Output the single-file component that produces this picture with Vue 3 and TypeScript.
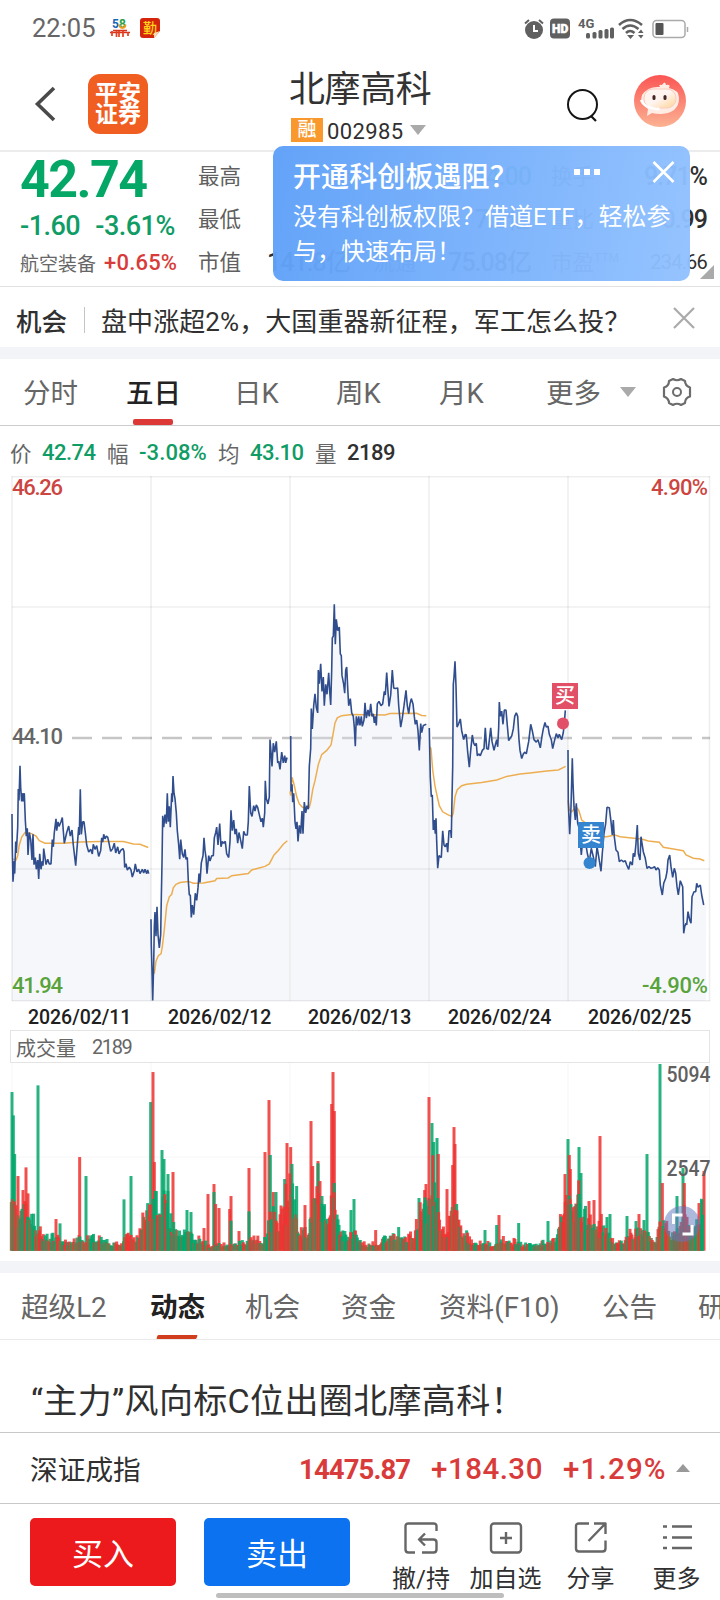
<script setup lang="ts">
type Tone = 'r' | 'g' | 'm'
interface Bar { x: number; h: number; tone: Tone }

const dayOne = '36,963 37,1060 39,1153 43,1095 44,1130 47,1040 49,1072 53,1000 55,893 57,925 60,828 62,890 65,928 68,905 70,928 73,905 76,980 79,1025 82,1003 84,1078 88,1015 92,1035 96,1092 99,1020 102,1105 106,1085 109,1118 113,1092 116,1145 119,1075 123,1118 127,1095 129,1108 131,1060 135,1085 138,1105 143,1090 148,1103 153,1103 157,1035 160,1055 163,1015 168,977 170,1010 174,985 177,998 183,985 187,973 190,1010 193,1045 200,1015 206,997 211,1025 216,1008 220,1050 227,1108 231,1060 236,1000 238,1022 241,894 244,1020 248,985 252,985 256,1015 260,1050 266,1070 272,1062 277,1075 280,1048 285,1062 290,1052 296,1082 302,1065 305,1030 308,1042 311,1020 315,1033 319,1025 323,1028 327,1045 332,1068 338,1060 343,1045 347,1072 353,1055 357,1075 362,1065 369,1060 372,1068 374,1113 378,1102 382,1120 388,1112 393,1120 397,1140 403,1122 406,1103 411,1125 416,1118 420,1130 427,1118 431,1128 435,1118 440,1130 443,1120 446,1130'
const dayTwo = '453,1258 454,1330 456,1400 458,1485 461,1380 463,1280 465,1238 468,1305 471,1223 474,1300 478,1338 482,1300 484,1200 486,1100 488,968 491,1000 495,965 499,990 502,905 505,985 508,942 511,1000 515,905 517,930 519,857 522,905 525,920 529,960 532,1010 536,1050 539,1090 542,1035 547,1075 551,1085 555,1062 558,1090 562,1085 565,1150 568,1190 571,1190 574,1253 577,1218 581,1245 586,1185 590,1205 594,1170 597,1130 600,1155 604,1100 609,1080 612,1030 615,1065 618,1085 621,1130 626,1080 630,1095 635,1080 640,1080 643,1030 647,1015 650,1000 654,1050 659,990 663,1055 667,1040 671,1045 676,1040 680,1075 686,1085 690,1040 693,953 697,1010 701,980 705,1020 709,1005 713,1045 717,1015 722,1038 727,1060 731,1012 736,1022 742,1022 745,985 748,885 752,960 756,970 761,940 765,955 769,938 773,945 778,965 783,985 787,975 790,1000 794,960 796,870 799,920 804,935 808,915 810,755 813,790 816,830 820,765 824,790 829,760 833,820 836,815 840,838 845,790 850,820 854,800 857,820 861,805'
const dayThree = '32,745 33,900 36,880 38,930 41,905 45,985 48,1005 51,985 54,1040 58,995 62,1018 66,955 69,1018 73,930 77,960 81,940 85,950 88,830 92,780 94,668 97,725 101,660 105,627 109,665 113,680 115,560 118,598 122,543 126,620 130,580 133,660 137,600 141,628 146,568 149,620 152,658 155,560 157,470 160,465 163,376 166,488 169,418 173,450 178,440 181,515 184,520 186,575 191,600 194,625 197,560 200,552 203,610 206,660 211,640 215,680 220,690 223,720 226,773 229,690 233,715 236,690 240,715 244,690 247,718 252,700 255,652 259,695 264,672 268,690 272,655 276,690 280,683 283,708 286,690 289,715 292,655 297,648 303,660 308,655 313,620 316,630 320,567 323,610 327,662 332,630 337,560 341,610 346,612 353,610 356,660 362,720 367,695 372,660 378,617 382,660 386,682 390,655 394,640 399,655 403,690 406,712 410,700 414,730 418,785 422,710 425,735 430,715 439,712'
const dayFour = '448,722 449,780 451,860 454,915 457,910 460,1008 463,980 466,1018 468,975 470,1040 473,1115 477,1080 484,1085 488,1010 492,1050 496,1055 500,1045 503,1070 507,1010 512,1010 514,1030 516,920 518,830 520,600 522,580 525,536 528,605 531,720 536,710 541,697 545,730 551,755 556,740 559,742 563,790 568,832 572,785 577,742 581,765 585,772 589,765 592,800 596,795 601,800 607,785 612,780 616,722 620,780 625,782 632,722 636,760 642,785 646,770 650,755 653,775 656,720 658,650 661,690 665,675 669,712 673,672 678,672 682,715 686,758 691,750 695,745 700,725 704,690 709,680 713,690 717,755 720,785 725,808 730,795 735,790 739,795 742,780 746,760 752,712 757,730 762,755 769,762 774,755 781,778 786,745 790,725 795,707 799,720 804,717 808,740 814,755 818,780 823,760 829,738 834,750 838,740 845,755 850,735 853,710 856,673'
const dayFive = '204,330 205,490 209,583 213,500 217,355 219,430 222,500 226,540 229,490 233,550 236,560 240,590 244,645 248,600 256,600 262,640 268,665 274,625 280,650 286,680 291,620 296,650 303,694 307,640 312,580 317,550 321,502 328,503 333,545 337,585 340,540 343,590 348,630 354,637 358,665 364,660 370,665 376,662 380,675 386,688 391,665 397,675 400,640 404,650 408,610 412,555 415,640 420,660 423,590 426,610 430,635 436,655 441,685 447,680 453,685 458,683 464,680 468,690 473,683 478,690 481,735 487,765 491,730 497,715 501,695 504,660 509,645 513,680 518,712 523,685 527,700 531,740 535,765 541,722 548,740 551,880 554,860 558,850 560,855 564,815 569,840 573,850 576,770 582,755 587,755 590,730 594,742 601,735 605,765 611,795'
const avgOne = '40,1090 48,1092 53,1080 58,1050 65,1028 75,1015 95,1018 108,1025 118,1038 135,1045 190,1045 240,1042 300,1040 370,1040 400,1047 420,1048 445,1057'
const avgTwo = '458,1390 463,1410 468,1375 475,1360 483,1355 487,1335 492,1295 500,1220 508,1195 515,1188 520,1170 528,1160 540,1155 565,1152 580,1157 610,1156 645,1150 650,1144 685,1142 695,1136 745,1130 755,1120 795,1110 808,1103 815,1090 822,1078 835,1065 850,1048 862,1038'
const avgThree = '30,900 32,912 36,860 42,880 50,915 58,935 68,945 88,945 93,925 98,895 105,870 115,825 125,797 140,785 153,770 158,745 165,708 172,694 185,688 215,685 315,686 330,682 410,681 425,687 439,688'
const avgFour = '450,775 453,780 458,840 465,885 472,915 478,940 488,957 503,965 516,970 520,960 525,915 532,895 545,884 560,880 605,875 650,868 680,858 720,851 750,848 800,843 835,840 857,830'
const avgFive = '205,480 208,510 215,515 228,500 236,510 245,540 258,550 300,590 320,590 345,585 360,590 395,594 425,597 445,603 478,607 490,622 520,627 550,632 558,645 580,655 600,657 613,662'

// scale raw samples into the plot box, whose origin is the top left of the price chart
function place(raw: string, dx: number, dy: number, sy: number): string {
  return raw.split(' ').map(p => {
    const [x, y] = p.split(',').map(Number)
    return `${(dx + x / 3).toFixed(1)},${(dy + y / sy).toFixed(1)}`
  }).join(' ')
}
const frames: [string, string, number, number, number][] = [
  [dayOne, avgOne, 0, -6, 2.8],
  [dayTwo, avgTwo, 0, -6, 2.8],
  [dayThree, avgThree, 280, -6, 2.8],
  [dayFour, avgFour, 280, -6, 2.8],
  [dayFive, avgFive, 500, 164, 3],
]
const series = frames.map(([p, a, dx, dy, sy]) => {
  const price = place(p, dx, dy, sy)
  const pts = price.split(' ')
  const first = pts[0].split(',')[0]
  const [lastX, lastY] = pts[pts.length - 1].split(',').map(Number)
  const edge = lastX + 2.5
  return { price, avg: place(a, dx, dy, sy), area: `${first},525 ${price} ${edge},${lastY} ${edge},525` }
})

const envelope: [number, number][] = [[34,230],[45,170],[60,150],[75,170],[90,140],[110,90],[125,70],[150,52],[170,60],[190,38],[205,30],[220,60],[240,48],[255,38],[270,55],[290,55],[310,42],[340,28],[350,50],[360,20],[372,60],[400,55],[415,82],[430,150],[450,170],[465,190],[480,150],[500,215],[515,100],[545,65],[565,110],[585,55],[605,45],[630,18],[650,25],[675,25],[700,22],[730,35],[760,50],[790,45],[805,90],[820,175],[835,90],[850,180],[870,240],[885,190],[900,80],[925,80],[945,240],[970,150],[985,125],[1000,200],[1015,110],[1035,70],[1050,60],[1062,70],[1080,38],[1100,30],[1140,30],[1165,60],[1190,65],[1220,52],[1240,62],[1260,150],[1280,180],[1300,300],[1310,230],[1325,130],[1340,75],[1360,200],[1380,100],[1400,62],[1420,25],[1450,38],[1480,24],[1500,50],[1520,40],[1550,38],[1570,20],[1590,35],[1610,20],[1630,38],[1660,38],[1680,110],[1700,190],[1715,150],[1730,210],[1745,130],[1770,140],[1800,85],[1820,75],[1840,42],[1870,32],[1890,70],[1915,80],[1940,80],[1965,40],[1980,110],[2000,95],[2020,60],[2035,90],[2055,160],[2075,80],[2100,140],[2112,190]]
const peaks: [number, number, Tone][] = [[36,476,'g'],[40,406,'g'],[44,290,'g'],[54,224,'r'],[69,182,'r'],[78,250,'r'],[84,172,'r'],[114,496,'g'],[168,95,'r'],[180,82,'g'],[239,281,'r'],[258,224,'g'],[372,154,'g'],[393,224,'g'],[452,446,'g'],[459,536,'r'],[463,266,'r'],[486,302,'g'],[492,275,'g'],[504,230,'g'],[519,236,'r'],[561,122,'g'],[573,116,'g'],[612,68,'r'],[624,170,'r'],[642,200,'r'],[642,176,'g'],[647,140,'r'],[657,128,'r'],[693,164,'r'],[689,125,'r'],[693,90,'g'],[717,59,'r'],[747,248,'r'],[747,118,'g'],[795,296,'r'],[807,452,'r'],[811,287,'g'],[820,176,'r'],[828,176,'g'],[854,215,'g'],[861,323,'r'],[872,311,'r'],[876,260,'g'],[890,194,'g'],[915,137,'r'],[933,389,'r'],[938,254,'r'],[954,269,'r'],[954,262,'g'],[960,209,'r'],[966,164,'g'],[995,440,'r'],[999,536,'r'],[1003,419,'r'],[1003,203,'g'],[1053,122,'g'],[1062,155,'g'],[1127,62,'r'],[1196,71,'g'],[1257,158,'g'],[1274,182,'r'],[1278,200,'r'],[1287,461,'r'],[1296,383,'g'],[1301,326,'g'],[1311,338,'g'],[1315,290,'r'],[1341,185,'r'],[1358,257,'r'],[1362,371,'r'],[1365,320,'r'],[1370,140,'g'],[1455,62,'g'],[1497,107,'r'],[1490,77,'g'],[1556,83,'g'],[1644,89,'g'],[1695,230,'r'],[1704,335,'g'],[1708,287,'r'],[1711,245,'r'],[1737,311,'g'],[1743,233,'g'],[1736,211,'r'],[1767,149,'r'],[1782,152,'r'],[1800,344,'r'],[1804,110,'r'],[1821,101,'g'],[1830,110,'g'],[1881,104,'g'],[1908,89,'g'],[1917,110,'r'],[1932,92,'g'],[1941,290,'g'],[1980,560,'g'],[1987,203,'r'],[2031,164,'g'],[2049,248,'g'],[2053,203,'r'],[2097,143,'r'],[2106,152,'g'],[2112,239,'r']]

function levelAt(x: number): number {
  const i = envelope.findIndex(e => e[0] >= x)
  if (i <= 0) return envelope[Math.max(i, 0)][1]
  const [x0, h0] = envelope[i - 1]
  const [x1, h1] = envelope[i]
  return h0 + (h1 - h0) * (x - x0) / (x1 - x0)
}
const bars: Bar[] = []
peaks.forEach(([x, h, tone]) => bars.push({ x: x / 3, h: h / 3, tone }))
let seed = 17
for (let x = 34; x <= 2110; x += 2.9) {
  seed = (seed * 16807) % 2147483647
  const noise = (seed % 1000) / 1000
  const cool = (x > 480 && x < 600) || (x > 1010 && x < 1080) || (x > 1290 && x < 1315)
  const warm = (x > 835 && x < 875) || (x > 1315 && x < 1360) || (x > 1685 && x < 1705)
  const green = cool ? 65 : warm ? 8 : 30
  const mixed = cool ? 20 : warm ? 15 : 34
  const pick = (seed >> 9) % 100
  const tone: Tone = pick < green ? 'g' : pick < green + mixed ? 'm' : 'r'
  bars.push({ x: x / 3, h: levelAt(x) * (0.45 + 0.55 * noise) * (tone === 'm' ? 0.75 : 1) / 3, tone })
}

const dates = ['2026/02/11', '2026/02/12', '2026/02/13', '2026/02/24', '2026/02/25']
</script>

<template>
  <div class="screen">
    <div class="status">
      <span class="clock">22:05</span>
      <svg class="n1" width="22" height="22" viewBox="0 0 22 22">
        <text x="3" y="11" font-size="12" font-weight="700" fill="#1766b8">5</text>
        <text x="10" y="11" font-size="12" font-weight="700" fill="#26a148">8</text>
        <path d="M10.500 7.500q0 3.500 3 3.500t3-3.500" stroke="#f39a1d" stroke-width="1.800" fill="none" />
        <path d="M4 13.500h14M1 15.500h20" stroke="#d8321c" stroke-width="1.300" />
        <path d="M3 14v5M7.500 14v6M10 14v6M14 14v6M19 15v4" stroke="#e2401e" stroke-width="1.700" />
      </svg>
      <svg class="n2" width="20" height="20" viewBox="0 0 20 20">
        <path d="M3 0h14q3 0 3 3v10l-6 7H3q-3 0-3-3V3q0-3 3-3z" fill="#d4250c" />
        <text x="3" y="15" font-size="14" font-weight="500" fill="#ffd21c">勤</text>
        <path d="M14 20l6-7-6 2z" fill="#f9dcae" />
      </svg>
      <svg class="sys" width="170" height="26" viewBox="0 0 170 26">
        <g fill="#606060">
          <circle cx="10" cy="15" r="9" />
          <path d="M1 8.500L5 5M15 5L19 8.500" stroke="#606060" stroke-width="2" />
          <path d="M10 10v6h4" fill="none" stroke="#fff" stroke-width="2" />
          <rect x="26" y="3.500" width="20" height="20" rx="4" />
          <text x="28" y="18" font-size="12" font-weight="900" fill="#fff" stroke="#fff" stroke-width=".5">HD</text>
          <text x="54" y="13" font-size="13" font-weight="700">4G</text>
          <rect x="62" y="18" width="4" height="5.500" rx="1.500" /><rect x="68.500" y="17" width="4" height="6.500" rx="1.500" /><rect x="74.500" y="15" width="4" height="8.500" rx="1.500" /><rect x="80.500" y="14" width="4" height="9.500" rx="1.500" /><rect x="86" y="12.500" width="4" height="11" rx="1.500" />
        </g>
        <g fill="none" stroke="#606060" stroke-width="2.600">
          <path d="M95 10Q106 0 118 10" /><path d="M98.500 14Q106 7 114.500 14" /><path d="M102 18Q106 14 110.500 18" />
        </g>
        <path d="M103 20h7l-3.500 4zM114 18l3-3.500 2.500 3.500zM114 20h5.500L117 23.500z" fill="#606060" />
        <rect x="129" y="5.500" width="32" height="17" rx="3.500" fill="#fff" stroke="#aaa" stroke-width="1.500" />
        <rect x="131.500" y="8" width="8" height="12" rx="1" fill="#555" />
        <path d="M163.500 12v5" stroke="#aaa" stroke-width="1.500" />
      </svg>
    </div>

    <header class="head">
      <svg class="back" width="24" height="36" viewBox="0 0 24 36"><path d="M20 2L3.500 18l16.500 16" fill="none" stroke="#4a4a4a" stroke-width="3.600" /></svg>
      <div class="brand"><span>平安</span><span>证券</span></div>
      <div class="title">
        <h1>北摩高科</h1>
        <div class="code"><b>融</b><span>002985</span><i class="down"></i></div>
      </div>
      <svg class="search" width="34" height="36" viewBox="0 0 34 36"><circle cx="16.500" cy="16.500" r="14.500" fill="none" stroke="#151515" stroke-width="2" /><path d="M25 28l5 5" stroke="#151515" stroke-width="2.200" /></svg>
      <svg class="avatar" width="52" height="52" viewBox="0 0 52 52">
        <defs><linearGradient id="av" x1="0" y1="0" x2="0" y2="1"><stop offset="0" stop-color="#fb5553" /><stop offset="1" stop-color="#fbb293" /></linearGradient>
          <linearGradient id="face" x1="0" y1="0" x2="1" y2="1"><stop offset=".5" stop-color="#fff4f0" /><stop offset="1" stop-color="#ffd391" /></linearGradient></defs>
        <circle cx="26" cy="26" r="26" fill="url(#av)" />
        <path d="M26 12q-2-3 2-2 3-5 4 0 5-1 3 3 10 2 10 10 0 15-18 16-6 0-9-1l-5 3 1-7q-9-6-6-14 6-9 18-8z" fill="#ffece4" />
        <rect x="10" y="14" width="32" height="19" rx="9" fill="url(#face)" stroke="#f8cdbd" />
        <rect x="18.500" y="20" width="3" height="5" rx="1.500" fill="#442424" /><rect x="29.500" y="20" width="3" height="5" rx="1.500" fill="#442424" />
        <path d="M7 25q3 8 16 9" fill="none" stroke="#fff" stroke-width="2.500" /><circle cx="24" cy="34" r="1.800" fill="#fff" />
      </svg>
    </header>

    <section class="quote">
      <div class="last">
        <div class="price">42.74</div>
        <div class="chg"><span>-1.60</span><span>-3.61%</span></div>
        <div class="sector"><span>航空装备</span><b>+0.65%</b></div>
      </div>
      <dl class="stats">
        <dt>最高</dt><dd></dd><dt>今开</dt><dd class="gr">44.00</dd><dt>换手</dt><dd>9.71%</dd>
        <dt>最低</dt><dd></dd><dt>金额</dt><dd>7.3亿</dd><dt>量比</dt><dd>0.99</dd>
        <dt>市值</dt><dd>141.8亿</dd><dt>流通</dt><dd>75.08亿</dd><dt>市盈<sup>TTM</sup></dt><dd class="sm">234.66</dd>
      </dl>
      <i class="corner"></i>
      <aside class="toast">
        <h2>开通科创板遇阻？</h2>
        <p>没有科创板权限？借道ETF，轻松参<br>与，快速布局！</p>
        <svg class="acts" width="108" height="24" viewBox="0 0 108 24"><path d="M1 9h6v6h-6zM11 9h6v6h-6zM21 9h6v6h-6z" fill="#fff" /><path d="M80.500 2l20 20m0-20l-20 20" stroke="#fff" stroke-width="2.600" /></svg>
      </aside>
    </section>

    <section class="tip">
      <b>机会</b><i></i><span>盘中涨超2%，大国重器新征程，军工怎么投？</span>
      <svg width="22" height="22" viewBox="0 0 22 22"><path d="M1 1l20 20M21 1L1 21" stroke="#aaa" stroke-width="2.200" /></svg>
    </section>
    <div class="band"></div>

    <nav class="periods">
      <span>分时</span><span class="on">五日</span><span>日K</span><span>周K</span><span>月K</span><span>更多</span><i class="down"></i>
      <svg width="30" height="30" viewBox="0 0 30 30"><path d="M11 2q4 2.500 8 0l4 2q0 4.500 5 6.500v9q-5 1.500-5 6.500L19 28q-4-2.500-8 0L7 26q0-4.500-5-6.500v-9q5-1.500 5-6.500z" fill="none" stroke="#6c6c6c" stroke-width="2.200" stroke-linejoin="round" /><circle cx="15" cy="15" r="4" fill="none" stroke="#6c6c6c" stroke-width="2" /></svg>
    </nav>

    <div class="legend">
      <span>价</span><b class="gr">42.74</b><span>幅</span><b class="gr">-3.08%</b><span>均</span><b class="gr">43.10</b><span>量</span><b>2189</b>
    </div>

    <section class="chart">
      <svg width="720" height="526" viewBox="0 0 720 526">
        <path d="M72 262H710" stroke="#c6c6c6" stroke-width="2.400" stroke-dasharray="20 10" />
        <polygon v-for="(s, i) in series" :key="i" :points="s.area" class="area" />
        <g fill="none" stroke="#000" stroke-opacity=".065" stroke-width="1.600">
          <path d="M12 .7H710M12 131H710M12 393H710M12 524.700H710" />
          <path d="M12 0V525M151 0V525M290 0V525M429 0V525M568 0V525M709.500 0V525" />
        </g>
        <g v-for="(s, i) in series" :key="i">
          <polyline :points="s.avg" class="avg" />
          <polyline :points="s.price" class="line" />
        </g>
        <g class="num">
          <text x="12" y="19" textLength="51" class="up">46.26</text>
          <text x="708" y="19" text-anchor="end" textLength="57" class="up">4.90%</text>
          <text x="12" y="268" textLength="51" fill="#666">44.10</text>
          <text x="12" y="517" textLength="51" class="dn">41.94</text>
          <text x="708" y="517" text-anchor="end" textLength="66" class="dn">-4.90%</text>
        </g>
        <rect x="552" y="207" width="26" height="26" fill="#e25067" /><text x="565" y="227" class="mark">买</text><circle cx="563" cy="247.500" r="6" fill="#e25067" />
        <rect x="578" y="346" width="26" height="26" fill="#3584d0" /><text x="591" y="366" class="mark">卖</text><circle cx="589.500" cy="387" r="6" fill="#3584d0" />
      </svg>
      <div class="dates"><span v-for="d in dates" :key="d">{{ d }}</span></div>
    </section>

    <section class="volume">
      <div class="vhead"><span>成交量</span><span>2189</span></div>
      <svg width="720" height="188" viewBox="0 0 720 188">
        <path d="M12 0V187M151 0V187M290 0V187M429 0V187M568 0V187M709.500 0V187M12 94H710" stroke="#f6f6f6" fill="none" />
        <rect v-for="(b, i) in bars" :key="i" :x="b.x - 1.5" :y="187.7 - b.h" width="3" :height="b.h" :class="b.tone" />
        <g class="num" fill="#606060"><text x="710.500" y="19" text-anchor="end" textLength="44" lengthAdjust="spacingAndGlyphs">5094</text><text x="710.500" y="113" text-anchor="end" textLength="44" lengthAdjust="spacingAndGlyphs">2547</text></g>
        <circle cx="682" cy="161" r="18" fill="#6276bd" opacity=".52" />
        <path d="M673.500 161v-9h9M692 162v9h-9.500" fill="none" stroke="#fff" stroke-width="3" />
      </svg>
    </section>
    <div class="band low"></div>

    <nav class="tabs">
      <span>超级L2</span><span class="on">动态</span><span>机会</span><span>资金</span><span>资料(F10)</span><span>公告</span><span>研报</span>
    </nav>
    <article class="news">“主力”风向标C位出圈北摩高科！</article>
    <div class="index"><span>深证成指</span><b>14475.87</b><em>+184.30</em><em>+1.29%</em><i></i></div>

    <footer class="bottom">
      <button class="buy">买入</button><button class="sell">卖出</button>
      <div class="act"><svg viewBox="0 0 34 32"><path d="M32.500 9V4.500q0-3-3-3h-25q-3 0-3 3v23q0 3 3 3H11M18 30.500h11.500q3 0 3-3v-7q0-3-3-3H15M21 11.500L15 17.500l6 6" /></svg><span>撤/持</span></div>
      <div class="act"><svg viewBox="0 0 34 32"><rect x="2" y="1.500" width="30" height="29" rx="3" /><path d="M17 10v12M11 16h12" /></svg><span>加自选</span></div>
      <div class="act"><svg viewBox="0 0 34 32"><path d="M15 1.500H5q-3 0-3 3v22q0 3 3 3h23.500q3 0 3-3v-8M20 1.500h11.500V12M31 2L14.500 19" /></svg><span>分享</span></div>
      <div class="act"><svg viewBox="0 0 34 32"><path d="M3 4.500h4M3 15.500h4M3 26h4M12 4.500h20M12 15.500h20M12 26h20" /></svg><span>更多</span></div>
      <div class="home"></div>
    </footer>
  </div>
</template>

<style>
html, body { background: #fff; }
</style>

<style scoped>
* { box-sizing: border-box; }
.screen { width: 720px; height: 1600px; overflow: hidden; background: #fff; color: #303030; font-family: Roboto, "Noto Sans CJK SC", sans-serif; position: relative; white-space: nowrap; }
h1, h2, p, dl, dd { margin: 0; font-weight: 400; }
.gr { color: #109c65 !important; }
.down { width: 16px; height: 10px; border: 8px solid transparent; border-top: 10px solid #aaa; border-bottom: 0; }
.status { height: 56px; display: flex; align-items: center; padding: 0 30px 0 32px; color: #666; }
.clock { width: 77px; font-size: 25.500px; letter-spacing: 0; }
.n1 { margin-right: 9px; }
.sys { margin-left: auto; margin-right: -3.500px; }
.head { height: 96px; display: grid; grid-template-columns: 88px 201px 283px 61px 1fr; border-bottom: 2px solid #ececec; }
.back { margin: 30px 0 0 34px; }
.brand { margin-top: 18px; width: 60px; height: 60px; border-radius: 12px; background: #f15e22; color: #fff; font-size: 23px; line-height: 21px; font-weight: 700; padding-top: 9px; text-align: center; }
.brand span { display: block; }
.title h1 { font-size: 36px; line-height: 42px; margin: 13px 0 0; letter-spacing: -.4px; color: #333; }
.code { display: flex; align-items: center; height: 26px; margin: 6px 0 0 2px; }
.code b { width: 32px; height: 24px; background: #f9992d; color: #fff; font-size: 19px; line-height: 24px; font-weight: 500; text-align: center; }
.code span { font-size: 22px; letter-spacing: .4px; margin: 3px 6px 0 4px; }
.search { margin: 32px 0 0 -6px; }
.avatar { margin: 19px 0 0 1px; }
.quote { height: 135px; position: relative; display: flex; border-bottom: 1px solid #e2e2e2; }
.last { width: 198px; padding-left: 20px; }
.price { height: 52px; font-size: 52px; line-height: 55px; font-weight: 700; color: #05a766; letter-spacing: -1.600px; }
.chg { height: 43px; display: flex; gap: 15px; align-items: center; font-size: 27px; font-weight: 500; color: #109c65; letter-spacing: -.5px; padding-top: 1px; }
.sector { display: flex; align-items: center; height: 30px; font-size: 19px; color: #666; }
.sector b { color: #d83c3a; font-size: 22px; font-weight: 500; margin-left: 8px; letter-spacing: .2px; }
.stats { display: grid; grid-template-columns: 69px 106px 60px 118px 62px 94px; grid-template-rows: 43px 43px 43px; padding-top: 3px; line-height: 43px; width: 510px; }
.stats dt { font-size: 21.500px; color: #5f5f5f; }
.stats dt sup { font-size: 12px; line-height: 1; }
.stats dd { font-size: 25px; font-weight: 500; letter-spacing: -1px; }
.stats dd:nth-of-type(3n) { text-align: right; }
.stats dd:nth-of-type(3n+2) { text-align: right; padding-right: 20px; }
.stats .sm { font-size: 20px; font-weight: 400; letter-spacing: -.8px; }
.corner { position: absolute; right: 6px; bottom: 7px; border-left: 14px solid transparent; border-bottom: 14px solid #aaa; }
.toast { position: absolute; left: 273px; top: -6px; width: 417px; height: 135px; border-radius: 10px; background: linear-gradient(100deg, rgba(94,160,248,.97), rgba(145,193,255,.96)); color: #fff; padding: 15px 20px; }
.toast h2 { font-size: 28px; line-height: 34px; font-weight: 500; letter-spacing: .1px; }
.toast p { font-size: 24px; line-height: 35px; margin-top: 5px; }
.acts { position: absolute; left: 300px; top: 14px; }
.tip { height: 60px; display: flex; align-items: center; padding: 5px 25px 0 16px; }
.tip b { font-size: 25.500px; font-weight: 500; }
.tip i { width: 1px; height: 26px; background: #c4c4c4; margin: 0 16px 0 17px; }
.tip span { font-size: 26px; letter-spacing: .08px; }
.tip svg { margin: -4px 0 0 auto; }
.band { height: 12px; background: #f2f4f8; }
.periods { height: 67px; display: grid; grid-template-columns: 103px 108px 102px 103px 107px 74px 42px 30px; align-items: center; padding-left: 23px; font-size: 27.500px; color: #666; border-bottom: 1px solid #ccc; }
.periods span { line-height: 70px; height: 66px; }
.periods .on { color: #222; position: relative; font-weight: 500; }
.periods .on::after { content: ""; position: absolute; left: 7px; bottom: 0; width: 40px; height: 6px; border-radius: 2px; background: #dc3836; }
.legend { height: 50px; display: grid; grid-template-columns: 32px 65px 32px 79px 32px 65px 32px 80px; align-items: center; padding: 2px 0 0 10px; font-size: 21.500px; color: #666; }
.legend b { font-size: 22px; font-weight: 500; letter-spacing: -.5px; color: #303030; }
.legend b.gr:nth-child(4) { letter-spacing: .1px; }
.chart { height: 554px; }
svg { display: block; overflow: visible; }
.area { fill: #e0e6ee; opacity: .3; }
.avg { fill: none; stroke: #edae52; stroke-width: 1.500; }
.line { fill: none; stroke: #304e8d; stroke-width: 1.600; stroke-linejoin: bevel; }
.num text { font-size: 22px; font-weight: 500; }
.up { fill: #cc4540; }
.dn { fill: #58a33b; }
.mark { fill: #fff; font-size: 20px; text-anchor: middle; font-weight: 500; }
.dates { display: grid; grid-template-columns: repeat(5, 140px); padding-left: 28px; height: 28px; line-height: 32px; font-size: 19.500px; letter-spacing: -.05px; font-weight: 500; color: #202020; }
.volume { height: 231px; }
.vhead { width: 700px; height: 33px; margin-left: 10px; border: 1px solid #e4e4e4; display: flex; align-items: center; font-size: 20px; color: #666; padding: 1px 0 0 5px; gap: 16px; }
.vhead span + span { font-size: 20px; letter-spacing: -1.400px; }
.r { fill: #ee3432; opacity: .86; }
.g { fill: #02a66b; opacity: .86; }
.m { fill: #8f6c45; opacity: .9; }
.tabs { height: 67px; display: grid; grid-template-columns: 129px 95px 96px 98px 163px 96px 60px; padding-left: 21px; line-height: 70px; font-size: 27.600px; color: #666; border-bottom: 1px solid #e9e9e9; overflow: hidden; }
.tabs .on { color: #222; font-weight: 700; position: relative; height: 66px; }
.tabs .on::after { content: ""; position: absolute; left: 7px; bottom: 0; width: 40px; height: 4px; transform: skewX(-20deg); background: #d13e1e; border-radius: 1px; }
.news { height: 92px; padding-left: 31px; line-height: 123px; font-size: 34px; letter-spacing: .35px; }
.index { height: 71px; border-top: 1px solid #c8c8c8; display: grid; grid-template-columns: 269px 132px 132px 112px 14px; align-items: center; padding: 2px 0 0 30px; font-size: 27.700px; }
.index span { margin-top: -2px; }
.index b, .index em { color: #d93b3a; font-style: normal; }
.index b { font-size: 27.500px; font-weight: 700; letter-spacing: -.9px; }
.index em { font-size: 29.500px; font-weight: 500; letter-spacing: .5px; }
.index em + em { letter-spacing: 1.200px; }
.index i { width: 14px; height: 8px; border: 7px solid transparent; border-bottom: 8px solid #999; border-top: 0; margin: -3px 0 0 1px; }
.bottom { height: 97px; border-top: 1px solid #c8c8c8; display: grid; grid-template-columns: 174px 174px 85px 84px 86px 86px; padding: 14px 0 0 30px; position: relative; }
button { font-family: inherit; width: 146px; height: 68px; border: 0; border-radius: 5px; color: #fff; font-size: 31px; padding: 0 0 1px; }
.buy { background: #ec1a1c; }
.sell { background: #0c72ef; }
.act { display: flex; flex-direction: column; align-items: center; font-size: 24px; line-height: 34px; padding-top: 4px; margin-left: 1px; }
.act svg { width: 34px; height: 32px; fill: none; stroke: #666; stroke-width: 2.400; stroke-linejoin: round; }
.act span { margin-top: 8px; }
.home { position: absolute; left: 216px; top: 89px; width: 288px; height: 5px; border-radius: 3px; background: #bebebe; }
</style>
